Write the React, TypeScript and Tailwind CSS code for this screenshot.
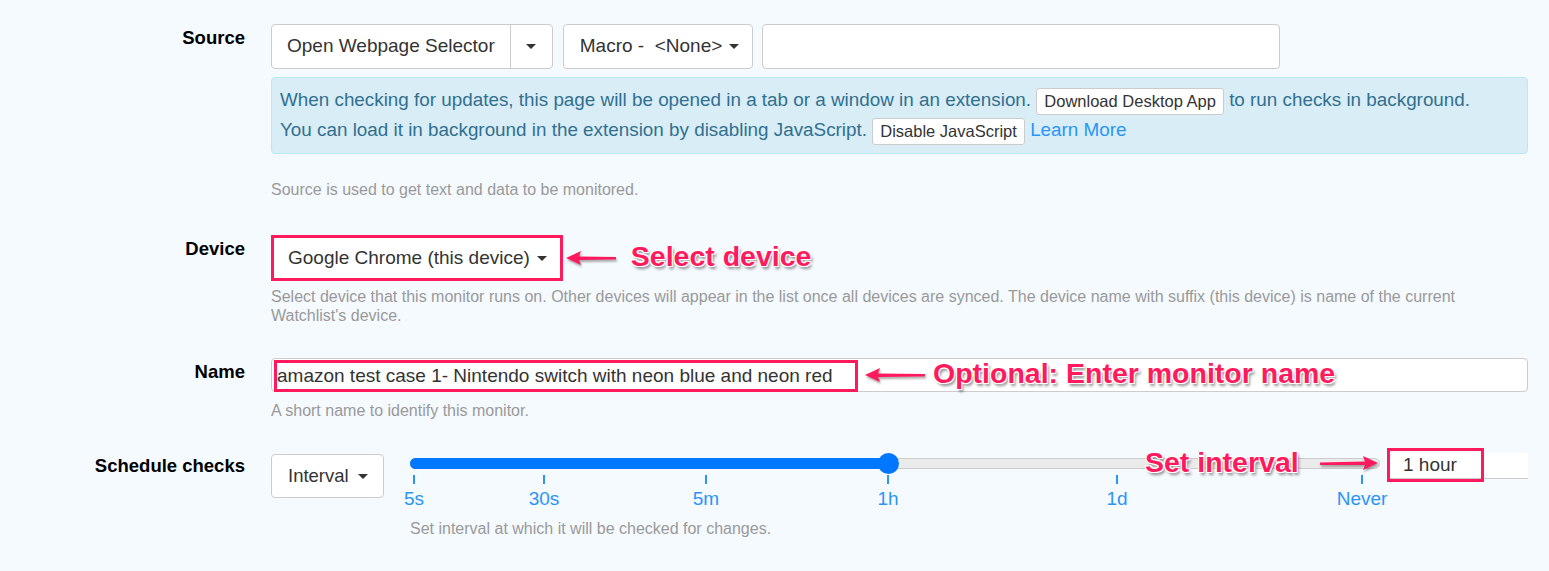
import React from "react";

const PINK = "#ff1a5e";

function Caret() {
  return (
    <span className="inline-block w-0 h-0 border-l-[5px] border-r-[5px] border-t-[5px] border-l-transparent border-r-transparent border-t-[#333]" />
  );
}

function Arrow({ width, dir }: { width: number; dir: "left" | "right" }) {
  const w = width;
  const pts =
    dir === "left"
      ? `0,8 15,1 13,6.5 ${w},7 ${w},9.5 13,10 15,15`
      : `${w},8 ${w - 15},1 ${w - 13},6.5 0,7.5 0,10 ${w - 13},10 ${w - 15},15`;
  return (
    <svg width={w} height={16} viewBox={`0 0 ${w} 16`} className="drop-shadow-[1px_2px_1px_rgba(0,0,0,0.35)]">
      <polygon points={pts} fill={PINK} />
    </svg>
  );
}

function Note({ children }: { children: React.ReactNode }) {
  return (
    <span className="font-bold text-[28.5px] leading-none text-[#ff1a5e] whitespace-nowrap [text-shadow:-1px_-1px_0_#fff,1px_-1px_0_#fff,-1px_1px_0_#fff,1px_1px_0_#fff,2px_3px_3px_rgba(0,0,0,0.45)]">
      {children}
    </span>
  );
}

export default function App() {
  const ticks = [
    { label: "5s", x: 4 },
    { label: "30s", x: 134 },
    { label: "5m", x: 296 },
    { label: "1h", x: 478 },
    { label: "1d", x: 707 },
    { label: "Never", x: 952 },
  ];

  return (
    <div className="min-h-screen bg-[#f5faff] font-['Liberation_Sans',Arial,sans-serif] text-[19px] text-[#333] pt-[24px] pr-[21px]">
      {/* SOURCE */}
      <div className="flex">
        <div className="w-[245px] shrink-0 text-right font-bold text-[18.5px] text-black leading-[28px]">Source</div>
        <div className="ml-[26px] flex-1">
          <div className="flex items-center">
            <div className="flex h-[45px] bg-white border border-[#ccc] rounded-[4px]">
              <button className="px-[15px] h-full">Open Webpage Selector</button>
              <button className="w-[42px] h-full border-l border-[#ccc] flex items-center justify-center">
                <Caret />
              </button>
            </div>
            <button className="ml-[10px] h-[45px] bg-white border border-[#ccc] rounded-[4px] pl-[16px] pr-[13px] flex items-center gap-[7px]">
              <span className="whitespace-pre">Macro -  &lt;None&gt;</span>
              <Caret />
            </button>
            <input className="ml-[9px] w-[518px] h-[45px] bg-white border border-[#ccc] rounded-[4px]" />
          </div>

          <div className="mt-[8px] h-[77px] bg-[#d9edf7] border border-[#bce8f1] rounded-[4px] px-[8px] pt-[7px] text-[#31708f] text-[18.85px] leading-[30px]">
            <div>
              When checking for updates, this page will be opened in a tab or a window in an extension.{" "}
              <button className="h-[27px] px-[7px] bg-white border border-[#ccc] rounded-[3px] text-[16.5px] text-[#333] leading-[25px] align-middle">
                Download Desktop App
              </button>{" "}
              to run checks in background.
            </div>
            <div>
              You can load it in background in the extension by disabling JavaScript.{" "}
              <button className="h-[27px] px-[7px] bg-white border border-[#ccc] rounded-[3px] text-[16.5px] text-[#333] leading-[25px] align-middle">
                Disable JavaScript
              </button>{" "}
              <a className="text-[#2a95f5]">Learn More</a>
            </div>
          </div>

          <p className="mt-[26px] text-[16px] leading-[20px] text-[#999]">Source is used to get text and data to be monitored.</p>
        </div>
      </div>

      {/* DEVICE */}
      <div className="flex mt-[35px]">
        <div className="w-[245px] shrink-0 text-right font-bold text-[18.5px] text-black leading-[28px]">Device</div>
        <div className="ml-[26px] flex-1">
          <div className="flex items-center">
            <button className="h-[46px] bg-white border-[3px] border-[#ff1a5e] pl-[14px] pr-[13px] flex items-center gap-[7px]">
              <span>Google Chrome (this device)</span>
              <Caret />
            </button>
            <div className="ml-[3px]">
              <Arrow width={50} dir="left" />
            </div>
            <div className="ml-[15px]">
              <Note>Select device</Note>
            </div>
          </div>
          <p className="mt-[6px] text-[16px] leading-[19px] text-[#999]">
            Select device that this monitor runs on. Other devices will appear in the list once all devices are synced. The device name with suffix (this device) is name of the current Watchlist's device.
          </p>
        </div>
      </div>

      {/* NAME */}
      <div className="flex mt-[33px]">
        <div className="w-[245px] shrink-0 text-right font-bold text-[18.5px] text-black leading-[28px]">Name</div>
        <div className="ml-[26px] flex-1">
          <div className="relative h-[34px] bg-white border border-[#ccc] rounded-[4px]">
            <div className="absolute left-[2px] top-[1px] w-[584px] h-[32px] border-[3px] border-[#ff1a5e] leading-[26px] whitespace-nowrap">
              amazon test case 1- Nintendo switch with neon blue and neon red
            </div>
            <div className="absolute left-[593px] top-[1px] flex items-center h-[30px]">
              <Arrow width={60} dir="left" />
              <div className="ml-[8px]">
                <Note>Optional: Enter monitor name</Note>
              </div>
            </div>
          </div>
          <p className="mt-[9px] text-[16px] leading-[20px] text-[#999]">A short name to identify this monitor.</p>
        </div>
      </div>

      {/* SCHEDULE */}
      <div className="flex mt-[33px]">
        <div className="w-[245px] shrink-0 text-right font-bold text-[18.5px] text-black leading-[28px] -mt-[2px]">Schedule checks</div>
        <div className="ml-[26px] flex-1 flex items-start">
          <button className="h-[44px] w-[113px] bg-white border border-[#ccc] rounded-[4px] pl-[16px] flex items-center gap-[9px]">
            <span className="text-[18.5px]">Interval</span>
            <Caret />
          </button>
          <div className="ml-[26px] flex-1">
            <div className="flex items-start">
              <div className="relative w-[970px] h-[57px]">
                <div className="absolute left-0 right-0 top-[4px] h-[11px] bg-[#ebebeb] border border-[#ccc] rounded-full" />
                <div className="absolute left-0 w-[478px] top-[4px] h-[11px] bg-[#0077ff] rounded-l-full" />
                <div className="absolute left-[468px] top-[-1px] w-[21px] h-[21px] rounded-full bg-[#0077ff]" />
                {ticks.map((t) => (
                  <div key={t.label}>
                    <div className="absolute top-[21px] w-[2px] h-[9px] bg-[#2a95f5]" style={{ left: t.x - 1 }} />
                    <div className="absolute top-[34px] -translate-x-1/2 text-[#2a95f5] leading-[22px]" style={{ left: t.x }}>
                      {t.label}
                    </div>
                  </div>
                ))}
                <div className="absolute left-[735px] top-[-6px]">
                  <Note>Set interval</Note>
                </div>
                <div className="absolute left-[910px] top-[1px]">
                  <Arrow width={58} dir="right" />
                </div>
              </div>
              <div className="relative ml-[10px] flex-1 h-[26px] mt-[-1px] bg-white border-b border-[#ccc]">
                <div className="absolute left-[-3px] top-[-5px] w-[97px] h-[34px] border-[3px] border-[#ff1a5e] pl-[13px] leading-[28px]">
                  1 hour
                </div>
              </div>
            </div>
            <p className="mt-[8px] text-[16px] leading-[20px] text-[#999]">Set interval at which it will be checked for changes.</p>
          </div>
        </div>
      </div>
    </div>
  );
}
